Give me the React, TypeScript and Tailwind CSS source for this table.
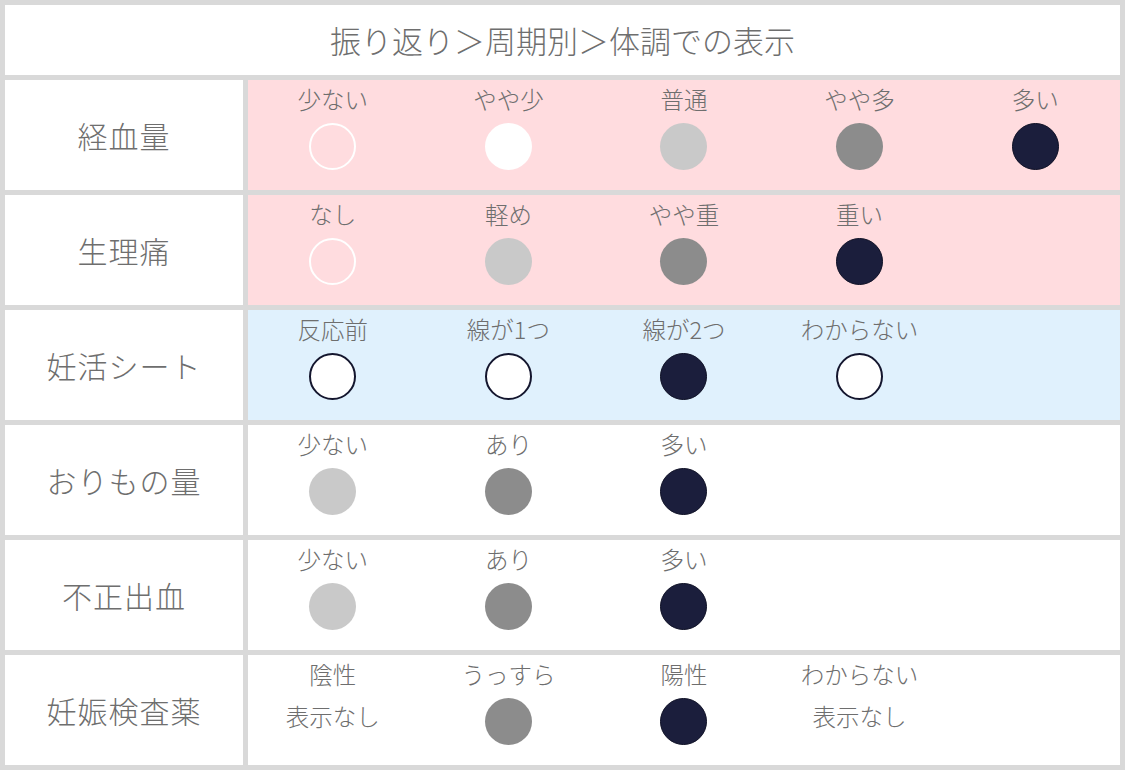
import React from 'react';

type Dot = 'ring' | 'white' | 'light' | 'mid' | 'dark' | 'outline' | 'none';

interface Option {
  label: string;
  dot: Dot;
}

interface Row {
  title: string;
  bg: string;
  options: Option[];
}

const rows: Row[] = [
  {
    title: '経血量',
    bg: 'bg-[#ffdcdf]',
    options: [
      { label: '少ない', dot: 'ring' },
      { label: 'やや少', dot: 'white' },
      { label: '普通', dot: 'light' },
      { label: 'やや多', dot: 'mid' },
      { label: '多い', dot: 'dark' },
    ],
  },
  {
    title: '生理痛',
    bg: 'bg-[#ffdcdf]',
    options: [
      { label: 'なし', dot: 'ring' },
      { label: '軽め', dot: 'light' },
      { label: 'やや重', dot: 'mid' },
      { label: '重い', dot: 'dark' },
    ],
  },
  {
    title: '妊活シート',
    bg: 'bg-[#e0f1fd]',
    options: [
      { label: '反応前', dot: 'outline' },
      { label: '線が1つ', dot: 'outline' },
      { label: '線が2つ', dot: 'dark' },
      { label: 'わからない', dot: 'outline' },
    ],
  },
  {
    title: 'おりもの量',
    bg: 'bg-white',
    options: [
      { label: '少ない', dot: 'light' },
      { label: 'あり', dot: 'mid' },
      { label: '多い', dot: 'dark' },
    ],
  },
  {
    title: '不正出血',
    bg: 'bg-white',
    options: [
      { label: '少ない', dot: 'light' },
      { label: 'あり', dot: 'mid' },
      { label: '多い', dot: 'dark' },
    ],
  },
  {
    title: '妊娠検査薬',
    bg: 'bg-white',
    options: [
      { label: '陰性', dot: 'none' },
      { label: 'うっすら', dot: 'mid' },
      { label: '陽性', dot: 'dark' },
      { label: 'わからない', dot: 'none' },
    ],
  },
];

// one class string per dot style (written out so tailwind picks them up)
const dotClass: Record<Exclude<Dot, 'none'>, string> = {
  ring: 'border-2 border-white',
  white: 'bg-white',
  light: 'bg-[#c9c9c9]',
  mid: 'bg-[#8c8c8c]',
  dark: 'bg-[#1b1e3c] border border-[#0d0f24]',
  outline: 'bg-white border-2 border-[#14162e]',
};

function Marker({ dot }: { dot: Dot }) {
  if (dot === 'none') {
    return (
      <div className="mt-[6px] h-[47px] flex items-center justify-center text-[23.5px] leading-none">
        表示なし
      </div>
    );
  }
  return <div className={`mt-[11px] w-[47px] h-[47px] rounded-full ${dotClass[dot]}`} />;
}

export default function App() {
  return (
    <div
      className="w-[1125px] h-[770px] bg-[#d9d9d9] p-[5px] flex flex-col gap-[5px] text-[#6e6e6e] font-light"
      style={{ fontFamily: '"Noto Sans CJK JP", "Noto Sans", sans-serif' }}
    >
      {/* Header */}
      <div className="h-[70px] bg-white flex items-center justify-center text-[31px]">
        振り返り＞周期別＞体調での表示
      </div>

      {rows.map((row) => (
        <div key={row.title} className="h-[110px] flex gap-[5px]">
          <div className="w-[238px] bg-white flex items-center justify-center text-[30px] tracking-[1px]">
            {row.title}
          </div>
          <div className={`flex-1 overflow-hidden ${row.bg}`}>
            <div className="grid grid-cols-[repeat(5,175.6px)] -ml-[3px]">
              {row.options.map((opt, i) => (
                <div key={i} className="flex flex-col items-center pt-[8px]">
                  <div className="h-[24px] flex items-center text-[23.5px] leading-none whitespace-nowrap">
                    {opt.label}
                  </div>
                  <Marker dot={opt.dot} />
                </div>
              ))}
            </div>
          </div>
        </div>
      ))}
    </div>
  );
}
